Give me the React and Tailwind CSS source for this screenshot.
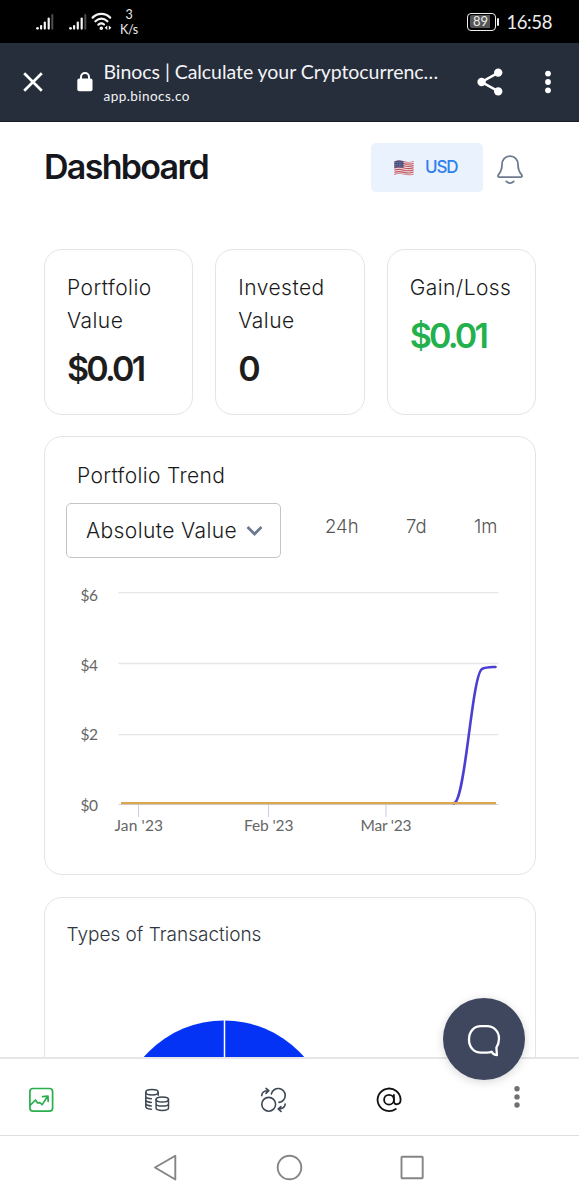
import React from "react";

const UI = "font-['Inter','Liberation_Sans',sans-serif]";
const SYS = "font-['Lato','Liberation_Sans',sans-serif]";

function Signal() {
  return (
    <svg width="19" height="18" viewBox="0 0 19 18" className="block">
      <g fill="#f4f4f4">
        <circle cx="2.5" cy="15.3" r="1.4" />
        <rect x="5" y="12" width="2.2" height="4.700" rx="1.1" />
        <rect x="8.700" y="8.4" width="2.2" height="8.300" rx="1.1" />
        <rect x="12.600" y="4.400" width="2.2" height="12.300" rx="1.1" />
      </g>
      <rect x="16.300" y="1" width="2" height="15.700" rx="1" fill="#4d4d4d" />
    </svg>
  );
}

function StatusBar() {
  return (
    <div className={"flex h-[43px] shrink-0 items-center bg-black text-[#ededed] " + SYS}>
      <div className="ml-[35px] flex items-center">
        <Signal />
        <div className="ml-[14px]"><Signal /></div>
        <svg width="21" height="19" viewBox="0 0 21 19" className="ml-1 block" fill="none" stroke="#f4f4f4" strokeWidth="2.2" strokeLinecap="round">
          <path d="M1.6 5.600C6.600 .6 14.200 .6 19.200 5.600" />
          <path d="M4.400 9.300C8.200 5.900 12.700 5.900 16.400 9.300" />
          <path d="M7.400 12.700C9.300 11.200 11.300 11.200 13 12.300" />
          <circle cx="10.300" cy="16.200" r=".7" fill="#f4f4f4" />
          <path d="M16.300 13.600v4.400l-2.600-2.200zM17.800 13.600v4.400l2.600-2.200z" fill="#f4f4f4" stroke="none" />
        </svg>
      </div>
      <div className="ml-[7px] mt-[2px] w-[20px] text-center text-[12.500px] leading-[14.500px]">
        <div>3</div>
        <div className="whitespace-nowrap tracking-[-0.300px]">K/s</div>
      </div>
      <div className="ml-auto mr-[27px] flex items-center">
        <div className="flex h-[18px] w-[29px] items-center justify-center rounded-[4px] border-[1.500px] border-[#ededed] p-[1.500px]">
          <div className="flex h-full w-full items-center rounded-[2px] bg-gradient-to-r from-[#555] from-85% to-black to-85% pl-[3px] text-[13px] leading-none">89</div>
        </div>
        <div className="ml-[1px] h-[8px] w-[2px] rounded bg-[#ededed]" />
        <div className="ml-[7px] mt-[2px] text-[18.500px] leading-none tracking-[-0.400px]">16:58</div>
      </div>
    </div>
  );
}

function BrowserBar() {
  return (
    <div className={"flex h-[79px] shrink-0 items-center border-b border-[#151b27] bg-[#262d3b] text-[#f3f4f6] " + SYS}>
      <svg width="20" height="20" viewBox="0 0 20 20" className="ml-[23px] block" stroke="#fff" strokeWidth="2.700">
        <path d="M1.200 1.200l17.600 17.600M18.800 1.200L1.200 18.800" />
      </svg>
      <svg width="16" height="20" viewBox="0 0 16 20" className="ml-[33.500px] block">
        <path d="M4 8V5a4 4 0 018 0v3" fill="none" stroke="#fff" strokeWidth="2" />
        <rect x=".3" y="6.600" width="15.200" height="12.600" rx="2" fill="#fff" />
      </svg>
      <div className="ml-[11px] mt-[1px] w-[345px]">
        <div className="whitespace-nowrap text-[19.500px] leading-[26px] tracking-[-0.050px]">Binocs | Calculate your Cryptocurrenc…</div>
        <div className="mt-[0px] text-[13.500px] leading-[22px] tracking-[0.450px]">app.binocs.co</div>
      </div>
      <svg width="26" height="28" viewBox="0 0 26 28" className="ml-[28px] block" fill="#fff">
        <path d="M21 4.800L4.600 14 21 23.200" fill="none" stroke="#fff" strokeWidth="2.500" />
        <circle cx="4.600" cy="14" r="4.200" /><circle cx="21.200" cy="4.600" r="4.200" /><circle cx="21.200" cy="23.400" r="4.200" />
      </svg>
      <svg width="6" height="24" viewBox="0 0 6 24" className="ml-[42.500px] block" fill="#fff">
        <circle cx="3" cy="3.600" r="2.900" /><circle cx="3" cy="12" r="2.900" /><circle cx="3" cy="20.300" r="2.900" />
      </svg>
    </div>
  );
}

function Flag() {
  return (
    <svg width="20" height="16" viewBox="0 0 20 16" className="block">
      <clipPath id="flag"><path d="M.4 1.600C4-.2 7 .4 10 1.300s6 1.100 9.600-.2v13.300c-3.600 1.400-6.600 1.100-9.600.2S4 13.200 .4 14.900z" /></clipPath>
      <g clipPath="url(#flag)">
        <rect width="20" height="16" fill="#ecdfe4" />
        <g stroke="#c2565f" strokeWidth="1.150" fill="none">
          {[1.2, 3.4, 5.6, 7.8, 10, 12.2, 14.4].map((y) => (
            <path key={y} d={`M0 ${y + 0.3}C4 ${y - 1.3} 7 ${y - 0.6} 10 ${y + 0.2}S16 ${y + 1.2} 20 ${y - 0.2}`} />
          ))}
        </g>
        <path d="M0 0h9.500v7.800C6 7 3 7 0 8.300z" fill="#4a527f" />
        <path d="M1.500 2.600h7M1.500 4.400h7M1.500 6.200h7" stroke="#a9afc9" strokeWidth=".6" strokeDasharray=".7 1" />
      </g>
    </svg>
  );
}

function StatCard({ label, value, valueClass }) {
  return (
    <div className="h-[166px] rounded-[18px] border border-[#e4e4e4] pl-[22px] pt-[21px]">
      <div className="text-[21px] font-light leading-[33px] tracking-[0.450px] text-[#1a1a1a]">{label}</div>
      <div className={"mt-[10px] text-[34px] leading-[44px] " + valueClass}>{value}</div>
    </div>
  );
}

function TrendChart() {
  return (
    <svg width="490" height="300" viewBox="45 570 490 300" className="block">
      <g stroke="#e6e6e6" strokeWidth="1.300">
        <path d="M118.500 592.600H498.500M118.500 663.500H498.500M118.500 734.600H498.500" />
      </g>
      <path d="M118.500 804.500H498.500" stroke="#cfd3df" strokeWidth="1" />
      <path d="M138.500 804v13M268.500 804v13M386 804v13" stroke="#ccd2e4" strokeWidth="1.100" />
      <path d="M454 803.300C459 802 463 779 468 741S477 672 482 669C486 667 490 667.200 495.500 667" fill="none" stroke="#4a3fd0" strokeWidth="2.600" strokeLinecap="round" />
      <path d="M121 803.200H496" stroke="#dca550" strokeWidth="2.200" />
      <g fill="#666" fontFamily="Lato, Liberation Sans, sans-serif" fontSize="15.500">
        <text x="80.500" y="600.500" textLength="17.500">$6</text>
        <text x="80.500" y="670.500" textLength="17.500">$4</text>
        <text x="80.500" y="740" textLength="17.500">$2</text>
        <text x="80.500" y="811" textLength="17.500">$0</text>
        <text x="114.500" y="830.500" textLength="48.500">Jan '23</text>
        <text x="244" y="830.500" textLength="49.500">Feb '23</text>
        <text x="360.500" y="830.500" textLength="51">Mar '23</text>
      </g>
    </svg>
  );
}

function BottomNav() {
  return (
    <nav className="flex h-[78px] shrink-0 items-center border-t-2 border-[#e6e6e6] bg-white pb-[2px]">
      <svg width="26" height="26" viewBox="0 0 26 26" className="ml-[28px] mt-[8px] block" fill="none" stroke="#2bae4e" strokeWidth="1.700" strokeLinecap="round" strokeLinejoin="round">
        <rect x="1.900" y="1.500" width="22.700" height="22.700" rx="3.200" />
        <path d="M2.300 18.200l5.200-5.200 2 3 2.200-.4 2.500 2 5-7.600M14.600 9.600l5.400-.5.200 5.300" />
      </svg>
      <svg width="26" height="24" viewBox="0 0 26 24" className="ml-[90px] mt-[8px] block" fill="none" stroke="#3e4754" strokeWidth="1.500" strokeLinecap="round">
        <ellipse cx="8" cy="4.200" rx="6.200" ry="2.700" />
        <path d="M1.800 4.200v14.600c0 1.300 2 2.200 5.500 2.400M1.800 8.500c.3 1.300 2 2.100 5.500 2.300M1.800 12c.3 1.400 2 2.200 5.500 2.400M1.800 15.500c.3 1.400 2 2.200 5.500 2.400M14.200 4.200v3" />
        <ellipse cx="18.300" cy="11.500" rx="6.200" ry="2.500" />
        <path d="M12.100 11.500v8.500c0 3.200 12.400 3.200 12.400 0v-8.500M12.100 15.700c0 3.100 12.400 3.100 12.400 0" />
      </svg>
      <svg width="27" height="26" viewBox="0 0 27 26" className="ml-[89.500px] mt-[8px] block" fill="none" stroke="#3e4754" strokeWidth="1.600" strokeLinecap="round" strokeLinejoin="round">
        <circle cx="8.700" cy="17.300" r="6.900" />
        <path d="M11.400 6.900A7 7 0 1119 15.400" />
        <path d="M1.700 8.600C1.900 5.600 4 3.500 8.600 3.700M6 1.400l2.800 2.300L6 6.400M25.100 17c0 3-2.100 4.900-6.700 4.900M21 19.500l-2.800 2.400 2.800 2.500" />
      </svg>
      <svg width="26" height="26" viewBox="0 0 26 26" className="ml-[89.500px] mt-[8px] block" fill="none" stroke="#111" strokeWidth="1.800" strokeLinecap="round">
        <circle cx="13" cy="12.700" r="4.900" />
        <path d="M17.900 8v6.300c0 4.400 6.700 3.800 6.700-1.600A11.500 11.300 0 1019.800 22" />
      </svg>
      <svg width="6" height="24" viewBox="0 0 6 24" className="ml-[111.500px] mt-[2px] block" fill="#707070">
        <circle cx="3" cy="3.700" r="2.700" /><circle cx="3" cy="11.900" r="2.700" /><circle cx="3" cy="20" r="2.700" />
      </svg>
    </nav>
  );
}

function SystemNav() {
  return (
    <div className="flex h-[65px] shrink-0 items-center border-t-[1.500px] border-[#dedede] bg-white">
      <svg width="24" height="28" viewBox="0 0 24 28" className="ml-[153px] block" fill="none" stroke="#858585" strokeWidth="1.900" strokeLinejoin="round">
        <path d="M2 13.500L22.300 1.800v23.700z" />
      </svg>
      <svg width="28" height="28" viewBox="0 0 28 28" className="ml-[99px] block" fill="none" stroke="#858585" strokeWidth="1.900">
        <circle cx="13.500" cy="13.500" r="11.800" />
      </svg>
      <svg width="26" height="26" viewBox="0 0 26 26" className="ml-[95px] block" fill="none" stroke="#858585" strokeWidth="1.900">
        <rect x="2.500" y="1.700" width="21.200" height="21.600" rx=".8" />
      </svg>
    </div>
  );
}

export default function App() {
  return (
    <div className={"relative flex h-[1200px] w-[579px] flex-col overflow-hidden bg-white " + UI}>
      <StatusBar />
      <BrowserBar />
      <main className="min-h-0 flex-1 overflow-hidden pl-[44px] pr-[43px]">
        <div className="flex pt-[21px]">
          <h1 className="text-[34px] font-semibold leading-[48px] tracking-[-1.700px] text-[#15171c]">Dashboard</h1>
          <div className="ml-auto flex h-[49px] w-[112px] items-center rounded-[5px] bg-[#eaf2fe] pl-[23px]">
            <Flag />
            <span className="ml-[11px] text-[17px] font-medium tracking-[-1.200px] text-[#2f80ed]">USD</span>
          </div>
          <svg width="28" height="32" viewBox="0 0 28 32" className="ml-[13px] mr-[12px] mt-[11px] block" fill="none" stroke="#6f7b8e" strokeWidth="1.800" strokeLinecap="round" strokeLinejoin="round">
            <path d="M14 2.200c-5 0-8 3.600-8 8.300 0 5.500-1.200 7.500-3.500 10.100-1 1.300-.5 2.600 1 2.600h21c1.500 0 2-1.300 1-2.600C23.200 18 22 16 22 10.500c0-4.700-3-8.300-8-8.300z" />
            <path d="M10.300 27.400c2.200 2.300 5.200 2.300 7.400 0" />
          </svg>
        </div>
        <div className="mt-[57px] grid grid-cols-3 gap-[22px]">
          <StatCard label={<>Portfolio<br />Value</>} value="$0.01" valueClass="font-semibold tracking-[-2.800px] text-[#1d1d1d]" />
          <StatCard label={<>Invested<br />Value</>} value="0" valueClass="font-semibold text-[#1d1d1d]" />
          <StatCard label="Gain/Loss" value="$0.01" valueClass="font-semibold tracking-[-2.800px] text-[#22b14c]" />
        </div>
        <section className="mt-[21px] h-[439px] rounded-[18px] border border-[#e4e4e4]">
          <h2 className="pl-[32px] pt-[22px] text-[21px] font-light leading-[33px] tracking-[0.350px] text-[#1a1a1a]">Portfolio Trend</h2>
          <div className="mt-[11px] flex pl-[21px]">
            <div className="flex h-[55px] w-[215px] items-center rounded-[5px] border border-[#c4c4c4] pl-[19px] text-[21px] font-light tracking-[0.400px] text-[#1a1a1a]">
              <span className="w-[151px] whitespace-nowrap">Absolute Value</span>
              <svg width="17" height="12" viewBox="0 0 17 12" className="ml-[9px] block" fill="none" stroke="#6b7a90" strokeWidth="2.700">
                <path d="M1.500 2l7 7 7-7" />
              </svg>
            </div>
            <div className="flex pt-[9px] text-[18.500px] font-light leading-[28px] text-[#555]">
              <span className="ml-[44px] w-[34px]">24h</span>
              <span className="ml-[47px] w-[22px]">7d</span>
              <span className="ml-[46px] w-[24px] whitespace-nowrap">1m</span>
            </div>
          </div>
          <div className="mt-[12px]"><TrendChart /></div>
        </section>
        <section className="mt-[22px] h-[360px] rounded-[18px] border border-[#e4e4e4]">
          <h2 className="pl-[21.500px] pt-[22px] text-[19px] font-light leading-[29px] tracking-[0] text-[#2f3640]">Types of Transactions</h2>
          <svg width="214" height="214" viewBox="0 0 214 214" className="ml-[72px] mt-[71px] block">
            <circle cx="107" cy="107" r="106.500" fill="#0433f5" />
            <path d="M107.500 0v107" stroke="#fff" strokeWidth="1.500" />
          </svg>
        </section>
      </main>
      <BottomNav />
      <SystemNav />
      <button className="absolute left-[443px] top-[998px] flex h-[82px] w-[82px] items-center justify-center rounded-full bg-[#3f475f] shadow-[0_2px_10px_rgba(0,0,0,0.160)]">
        <svg width="36" height="34" viewBox="0 0 36 34" className="mt-[1px] block" fill="none" stroke="#fff" strokeWidth="2.300" strokeLinejoin="round">
          <path d="M15 3.200h6C28 3.200 33 8.500 33 15.500c0 3.700-1.200 7-2.600 9.200l.5 7.300c-2 0-4-1.200-5.200-3.200-1.500.6-3 .8-4.700.8h-6C8 29.600 3 24.500 3 16.500S8 3.200 15 3.200z" />
        </svg>
      </button>
    </div>
  );
}
